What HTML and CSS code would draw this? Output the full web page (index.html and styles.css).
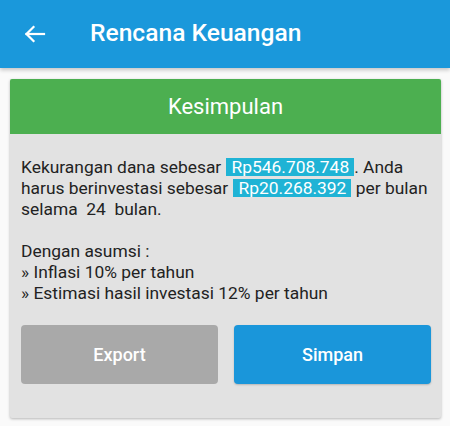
FILE: index.html
```html
<!DOCTYPE html>
<html lang="id">
<head>
<meta charset="utf-8">
<title>Rencana Keuangan</title>
<link rel="stylesheet" href="styles.css">
</head>
<body>
<header class="appbar">
  <button class="back" aria-label="Kembali">
    <svg width="22" height="18" viewBox="0 0 22 18" fill="none" stroke="#fff" stroke-width="2.2" stroke-linecap="square">
      <path d="M2.5 9H20"/>
      <path d="M9.5 2L2.5 9L9.5 16"/>
    </svg>
  </button>
  <h1 class="title">Rencana Keuangan</h1>
</header>
<main class="content">
  <section class="card">
    <div class="card-head">Kesimpulan</div>
    <div class="card-body">
      <p class="summary">Kekurangan dana sebesar <span class="hl">Rp546.708.748</span>. Anda<br>harus berinvestasi sebesar <span class="hl">Rp20.268.392</span> per bulan<br>selama&nbsp; 24&nbsp; bulan.<br><br>Dengan asumsi :<br>» Inflasi 10% per tahun<br>» Estimasi hasil investasi 12% per tahun</p>
      <div class="actions">
        <button class="btn btn-gray">Export</button>
        <button class="btn btn-blue">Simpan</button>
      </div>
    </div>
  </section>
</main>
</body>
</html>
```
FILE: styles.css
```css
html, body {
  margin: 0;
  padding: 0;
}
body {
  background: #fafafa;
  font-family: Roboto, "Noto Sans", "Liberation Sans", sans-serif;
  width: 450px;
  height: 426px;
  overflow: hidden;
}
.appbar {
  height: 68px;
  background: #1a98db;
  display: flex;
  align-items: center;
  box-shadow: 0 2px 4px rgba(0, 0, 0, 0.22);
  position: relative;
  z-index: 1;
}
.back {
  background: none;
  border: 0;
  padding: 0;
  margin: 0 0 0 24px;
  width: 22px;
  height: 18px;
  display: flex;
  align-items: center;
}
.title {
  margin: 0 0 0 44px;
  font-size: 24.6px;
  font-weight: 500;
  color: #fff;
  line-height: 1;
  position: relative;
  top: -1px;
}
.content {
  padding: 11px 9px 0 10px;
}
.card {
  background: #e2e2e2;
  border-radius: 2px;
  box-shadow: 0 1px 3px rgba(0, 0, 0, 0.28);
  overflow: hidden;
}
.card-head {
  height: 55px;
  background: #4caf50;
  color: #fff;
  font-size: 22px;
  display: flex;
  align-items: center;
  justify-content: center;
}
.card-body {
  padding: 23px 10px 34px 11px;
}
.summary {
  margin: 0;
  font-size: 17.4px;
  line-height: 21px;
  color: #222;
}
.hl {
  display: inline-block;
  line-height: 18px;
  background: #1fb3d5;
  color: #fff;
  padding: 0 5px 0 6px;
}
.actions {
  margin-top: 21px;
  display: grid;
  grid-template-columns: 1fr 1fr;
  gap: 16px;
}
.btn {
  height: 59px;
  border: 0;
  border-radius: 4px;
  color: #fff;
  font-family: Roboto, "Noto Sans", "Liberation Sans", sans-serif;
  font-size: 18px;
  font-weight: 500;
}
.btn-gray {
  background: #a9a9a9;
}
.btn-blue {
  background: #1a96da;
  box-shadow: 0 1px 2px rgba(0, 0, 0, 0.2);
}
```
